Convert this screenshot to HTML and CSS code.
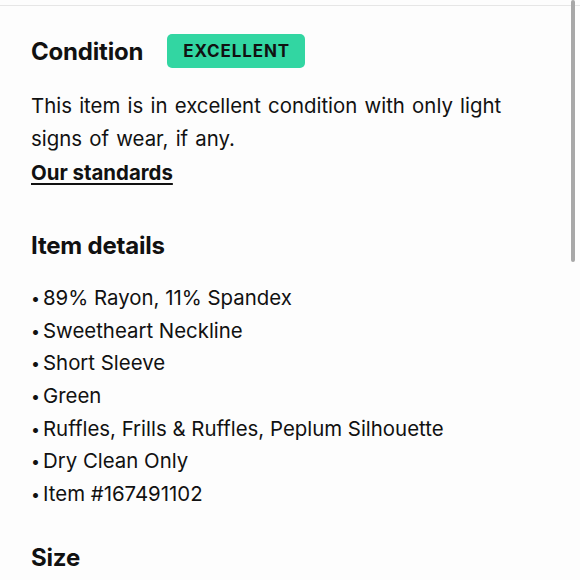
FILE: index.html
```html
<!DOCTYPE html>
<html>
<head>
<meta charset="utf-8">
<link rel="stylesheet" href="styles.css">
</head>
<body>
<div class="topline"></div>
<div class="scrollbar"></div>
<main class="content">
  <section class="condition">
    <div class="cond-head">
      <h2 class="heading">Condition</h2>
      <span class="badge">EXCELLENT</span>
    </div>
    <p class="desc">This item is in excellent condition with only light signs of wear, if any.</p>
    <a class="link" href="#">Our standards</a>
  </section>
  <section class="details">
    <h2 class="heading">Item details</h2>
    <ul class="list">
      <li><span class="dot">•</span>89% Rayon, 11% Spandex</li>
      <li><span class="dot">•</span>Sweetheart Neckline</li>
      <li><span class="dot">•</span>Short Sleeve</li>
      <li><span class="dot">•</span>Green</li>
      <li><span class="dot">•</span>Ruffles, Frills &amp; Ruffles, Peplum Silhouette</li>
      <li><span class="dot">•</span>Dry Clean Only</li>
      <li><span class="dot">•</span>Item #167491102</li>
    </ul>
  </section>
  <section class="size">
    <h2 class="heading">Size</h2>
  </section>
</main>
</body>
</html>
```
FILE: styles.css
```css
html, body {
  margin: 0;
  padding: 0;
  background: #fdfdfd;
  overflow: hidden;
}
body {
  font-family: Inter, "Noto Sans", sans-serif;
  color: #111;
  width: 580px;
  height: 580px;
  position: relative;
}
.topline {
  height: 5px;
  border-bottom: 1px solid #e6e6e6;
}
.scrollbar {
  position: absolute;
  left: 571px;
  top: 0;
  width: 4px;
  height: 262px;
  background: #a8a8a8;
  border-radius: 2px;
}
.content {
  padding: 0 31px;
}
.heading {
  margin: 0;
  font-size: 24px;
  font-weight: 700;
  letter-spacing: -0.2px;
}
.cond-head {
  display: flex;
  align-items: center;
  gap: 24px;
  margin-top: 28px;
}
.badge {
  background: #32d6a2;
  border-radius: 5px;
  font-size: 17px;
  font-weight: 700;
  letter-spacing: 0.9px;
  padding: 0 15px 0 16px;
  height: 34px;
  line-height: 34px;
  color: #111;
}
.desc {
  margin: 21px 0 0;
  max-width: 500px;
  font-size: 20.4px;
  line-height: 33px;
  word-spacing: 1.5px;
}
.link {
  display: inline-block;
  margin-top: 1px;
  font-size: 20.4px;
  font-weight: 700;
  color: #111;
  line-height: 33px;
  text-decoration: underline;
  text-underline-offset: 3px;
}
.details {
  margin-top: 42px;
}
.list {
  list-style: none;
  margin: 22px 0 0;
  padding: 0;
  font-size: 20.4px;
  line-height: 32.7px;
}
.list li {
  height: 32.7px;
}
.dot {
  display: inline-block;
  width: 12px;
  font-size: 16px;
  line-height: 1;
  vertical-align: 1px;
}
.size {
  margin-top: 32px;
}
```
